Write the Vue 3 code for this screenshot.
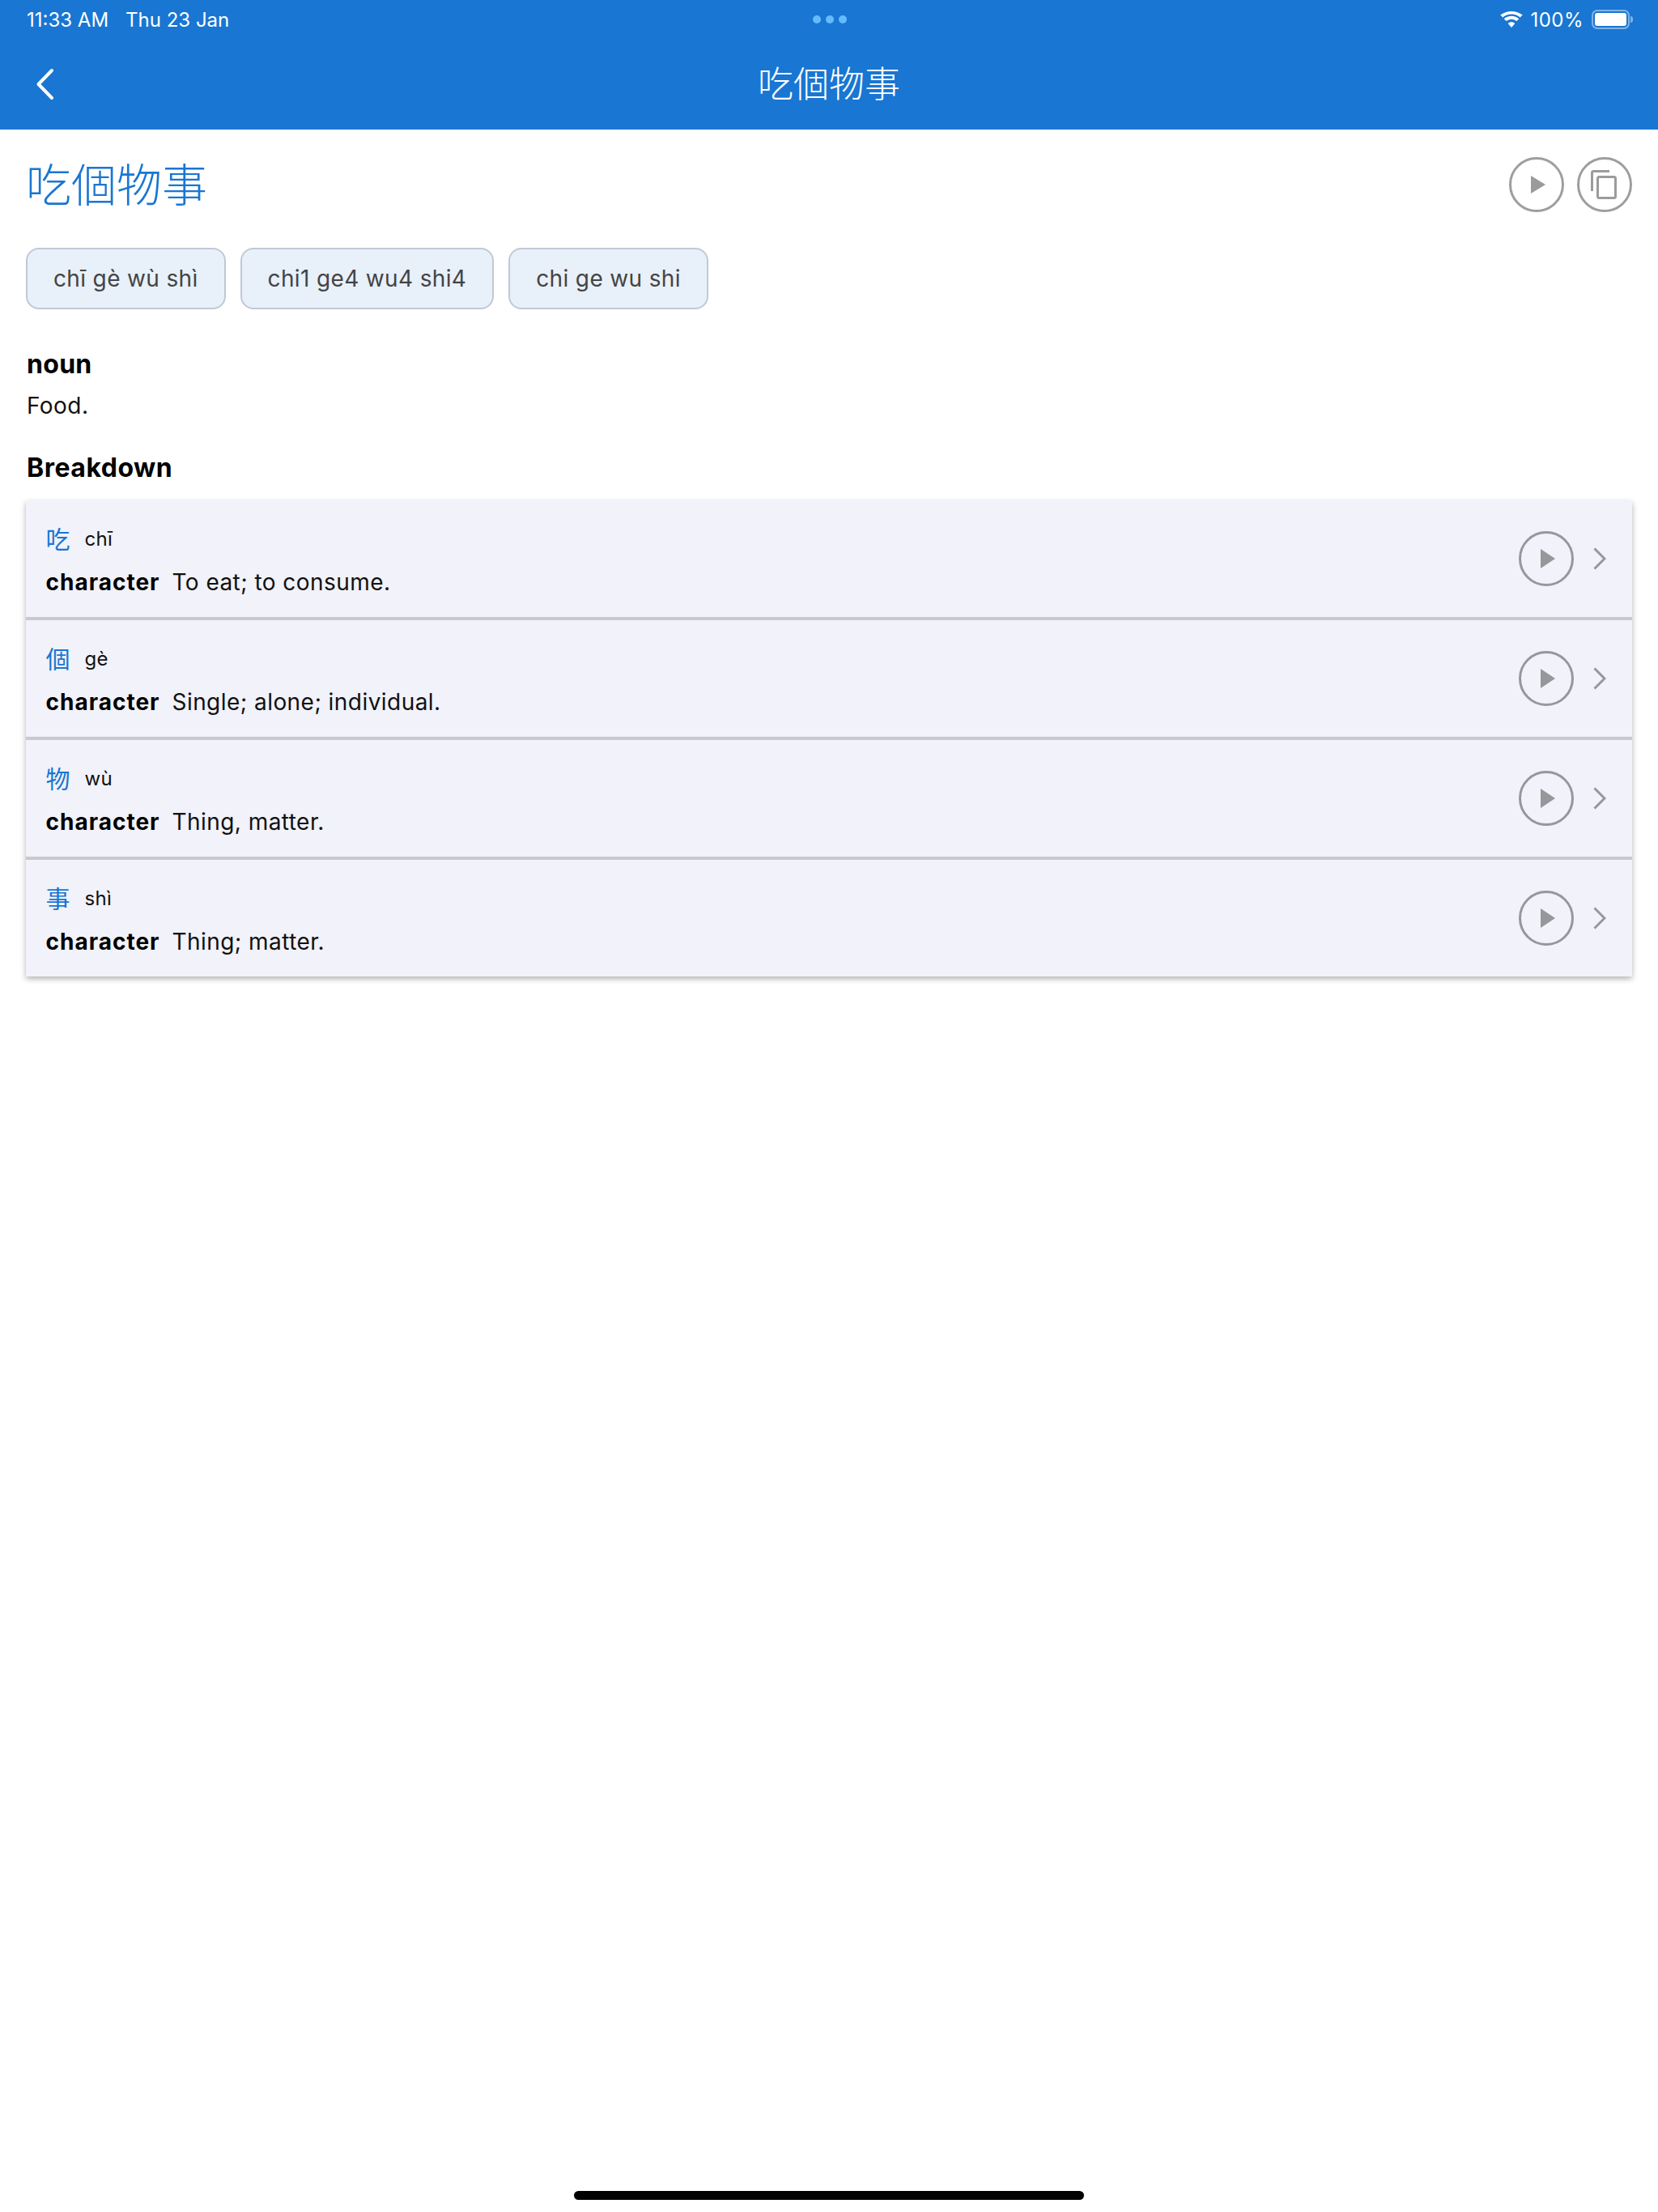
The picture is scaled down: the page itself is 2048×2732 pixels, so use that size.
<script setup>
const chips = ['chī gè wù shì', 'chi1 ge4 wu4 shi4', 'chi ge wu shi']
const rows = [
  { han: '吃', pin: 'chī', def: 'To eat; to consume.' },
  { han: '個', pin: 'gè', def: 'Single; alone; individual.' },
  { han: '物', pin: 'wù', def: 'Thing, matter.' },
  { han: '事', pin: 'shì', def: 'Thing; matter.' }
]
</script>

<template>
  <div class="page">
    <header class="header">
      <div class="status">
        <div class="status-left"><span>11:33 AM</span><span>Thu 23 Jan</span></div>
        <div class="dots"><i></i><i></i><i></i></div>
        <div class="status-right">
          <svg width="28" height="20" viewBox="0 0 28 20"><path fill="#fff" d="M14 3.400c4.100 0 7.800 1.500 10.700 4.100L27.700 4.600C23.900 1.700 19.200 0 14 0S4.100 1.700.3 4.600l3 2.900C6.200 4.900 9.900 3.400 14 3.400zM14 9.700c2.400 0 4.600.9 6.300 2.400l3-2.900C20.800 7 17.600 5.700 14 5.700S7.200 7 4.700 9.200l3 2.900c1.700-1.500 3.900-2.400 6.300-2.400zM14 13.200c-1.700 0-3.200.6-4.300 1.700L14 20l4.300-5.100c-1.100-1.100-2.600-1.700-4.300-1.700z"/></svg>
          <span class="pct">100%</span>
          <div class="battery"><div class="fill"></div></div>
          <div class="nub"></div>
        </div>
      </div>
      <div class="nav">
        <svg class="back" width="24" height="40" viewBox="0 0 24 40"><path d="M20 3 L3.500 20 L20 37" fill="none" stroke="#fff" stroke-width="4" stroke-linecap="round" stroke-linejoin="round"/></svg>
        <div class="nav-title">吃個物事</div>
      </div>
    </header>

    <main class="content">
      <div class="title-row">
        <h1 class="title">吃個物事</h1>
        <div class="actions">
          <button class="circle">
            <svg class="play-top" width="18" height="22" viewBox="0 0 18 22"><path d="M0 0 L18 11 L0 22 Z" fill="#9b9b9b"/></svg>
          </button>
          <button class="circle">
            <svg class="copy" width="32" height="36" viewBox="0 0 32 36"><path d="M1.500 26V3a1.500 1.500 0 0 1 1.500-1.500H23" fill="none" stroke="#9b9b9b" stroke-width="3"/><rect x="8.500" y="8.500" width="22" height="26" rx="2" fill="none" stroke="#9b9b9b" stroke-width="3"/></svg>
          </button>
        </div>
      </div>

      <div class="chips">
        <span v-for="c in chips" :key="c" class="chip">{{ c }}</span>
      </div>

      <div class="pos">noun</div>
      <div class="gloss">Food.</div>
      <div class="section">Breakdown</div>

      <div class="list">
        <div v-for="r in rows" :key="r.han" class="row">
          <div class="row-text">
            <div class="line1"><span class="han">{{ r.han }}</span><span class="pin">{{ r.pin }}</span></div>
            <div class="line2"><b>character</b><span>{{ r.def }}</span></div>
          </div>
          <button class="circle small">
            <svg width="18" height="24" viewBox="0 0 18 24"><path d="M0 0 L18 12 L0 24 Z" fill="#97979b"/></svg>
          </button>
          <svg class="chev" width="16" height="28" viewBox="0 0 16 28"><path d="M1.500 1.500 L14 14 L1.500 26.500" fill="none" stroke="#97979b" stroke-width="3"/></svg>
        </div>
      </div>
    </main>

    <div class="home"></div>
  </div>
</template>

<style>
html, body { margin: 0; background: #fff; }
</style>

<style scoped>
.page {
  width: 2048px;
  height: 2732px;
  display: flex;
  flex-direction: column;
  position: relative;
  background: #fff;
  font-family: Inter, "Noto Sans CJK TC", sans-serif;
  color: #111;
}
.header {
  height: 160px;
  background: #1976d2;
  color: #fff;
  display: flex;
  flex-direction: column;
  flex: none;
}
.status {
  height: 48px;
  padding: 0 32px 0 33px;
  display: grid;
  grid-template-columns: 1fr auto 1fr;
  align-items: center;
  font-size: 24px;
}
.status-left { display: flex; gap: 21px; }
.status-right { display: flex; align-items: center; justify-content: flex-end; }
.pct { margin-left: 9px; letter-spacing: 0.5px; }
.battery {
  margin-left: 10px;
  width: 47px;
  height: 24px;
  box-sizing: border-box;
  border: 2px solid rgba(255, 255, 255, 0.45);
  border-radius: 7px;
  padding: 2px;
}
.fill { width: 100%; height: 100%; background: #fff; border-radius: 3px; }
.nub {
  width: 3px;
  height: 8px;
  background: rgba(255, 255, 255, 0.45);
  border-radius: 0 3px 3px 0;
  margin-left: 1px;
  margin-right: -1px;
}
.dots { display: flex; gap: 6px; }
.dots i { width: 10px; height: 10px; border-radius: 50%; background: #66bbff; }
.nav {
  flex: 1;
  position: relative;
  display: flex;
  align-items: center;
  justify-content: center;
}
.back { position: absolute; left: 44px; top: 36px; }
.nav-title { font-size: 44px; line-height: 56px; font-weight: 300; }

.content { padding: 0 32px; flex: 1; }
.title-row {
  display: flex;
  justify-content: space-between;
  align-items: flex-start;
  padding-top: 34px;
  height: 112px;
}
.title {
  margin: 1px 0 0;
  font-size: 56px;
  line-height: 68px;
  font-weight: 300;
  color: #1976d2;
}
.actions { display: flex; gap: 16px; }
.circle {
  width: 68px;
  height: 68px;
  box-sizing: border-box;
  border: 3.500px solid #9e9e9e;
  border-radius: 50%;
  background: transparent;
  padding: 0;
  display: flex;
  align-items: center;
  justify-content: center;
  flex: none;
}
.circle.small { border-color: #97979b; border-width: 3px; }
.circle svg { display: block; }
.play-top { margin-left: 4px; }
.copy { margin-right: 2px; }
.circle.small svg { margin-left: 4px; }

.chips { display: flex; gap: 18px; }
.chip {
  height: 76px;
  box-sizing: border-box;
  padding: 0 32px;
  display: flex;
  align-items: center;
  background: #e8f0fa;
  border: 2px solid #c1c8d6;
  border-radius: 16px;
  font-size: 28px;
  letter-spacing: 0.35px;
  color: #444;
}
.pos {
  margin: 49px 0 0 1px;
  font-size: 32px;
  line-height: 38px;
  font-weight: 700;
  letter-spacing: 0.3px;
  color: #000;
}
.gloss {
  margin: 13px 0 0 1px;
  font-size: 28px;
  line-height: 38px;
  letter-spacing: 0.45px;
}
.section {
  margin: 38px 0 0 1px;
  font-size: 32px;
  line-height: 40px;
  font-weight: 700;
  letter-spacing: 0.5px;
  color: #000;
}
.list {
  margin-top: 20px;
  display: flex;
  flex-direction: column;
  gap: 4px;
  box-shadow: 0 3px 7px rgba(0, 0, 0, 0.3);
  background: #c9c9cc;
}
.row {
  height: 144px;
  box-sizing: border-box;
  padding: 0 32px 0 24.500px;
  display: flex;
  align-items: center;
  background: #f1f2fa;
}
.row-text { flex: 1; }
.line1 { display: flex; align-items: center; height: 48px; margin-top: -2px; }
.han { font-size: 30px; line-height: 36px; color: #1976d2; width: 48px; }
.pin { font-size: 24px; letter-spacing: 0.3px; }
.line2 { margin-top: 11px; font-size: 28px; line-height: 36px; letter-spacing: 0.45px; display: flex; gap: 15px; }
.line2 b { font-weight: 700; letter-spacing: 1px; color: #000; }
.chev { margin-left: 24px; flex: none; }

.home {
  position: absolute;
  left: 709px;
  top: 2706px;
  width: 630px;
  height: 11px;
  background: #000;
  border-radius: 6px;
}
</style>
